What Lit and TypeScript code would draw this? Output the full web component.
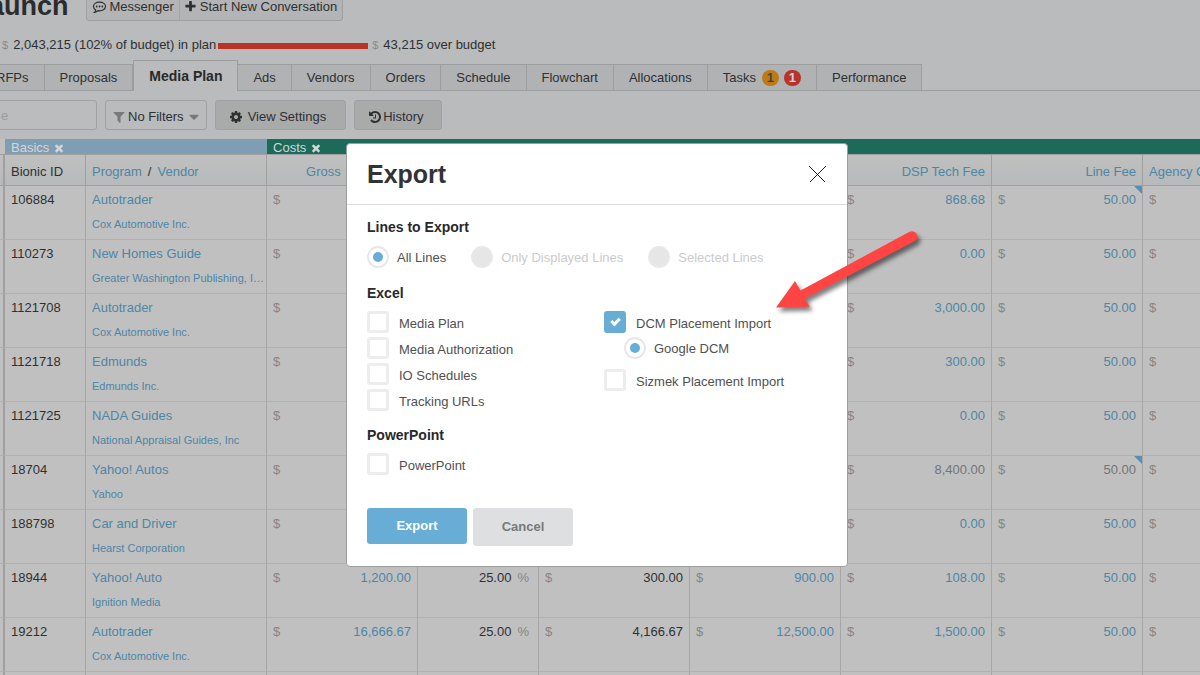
import { LitElement, html, css, svg, nothing } from "lit";
import { customElement, property } from "lit/decorators.js";
import { classMap } from "lit/directives/class-map.js";

const ICONS: Record<string, string> = {
  plus: "M1600 736v192q0 40-28 68t-68 28h-416v416q0 40-28 68t-68 28h-192q-40 0-68-28t-28-68v-416h-416q-40 0-68-28t-28-68v-192q0-40 28-68t68-28h416v-416q0-40 28-68t68-28h192q40 0 68 28t28 68v416h416q40 0 68 28t28 68z",
  filter: "M1595 295q17 41-14 70l-493 493v742q0 42-39 59-13 5-25 5-27 0-45-19l-256-256q-19-19-19-45v-486l-493-493q-31-29-14-70 17-39 59-39h1280q42 0 59 39z",
  cog: "M1152 896q0-106-75-181t-181-75-181 75-75 181 75 181 181 75 181-75 75-181zm512-109v222q0 12-8 23t-20 13l-185 28q-19 54-39 91 35 50 107 138 10 12 10 25t-9 23q-27 37-99 108t-94 71q-12 0-26-9l-138-108q-44 23-91 38-16 136-29 186-7 28-36 28h-222q-14 0-24.500-8.500t-11.500-21.500l-28-184q-49-16-90-37l-141 107q-10 9-25 9-14 0-25-11-126-114-165-168-7-10-7-23 0-12 8-23 15-21 51-66.500t54-70.500q-27-50-41-99l-183-27q-13-2-21-12.500t-8-23.500v-222q0-12 8-23t19-13l186-28q14-46 39-92-40-57-107-138-10-12-10-24 0-10 9-23 26-36 98.500-107.500t94.500-71.500q13 0 26 10l138 107q44-23 91-38 16-136 29-186 7-28 36-28h222q14 0 24.500 8.500t11.500 21.500l28 184q49 16 90 37l142-107q9-9 24-9 13 0 25 10 129 119 165 170 7 8 7 22 0 12-8 23-15 21-51 66.500t-54 70.500q26 50 41 98l183 28q13 2 21 12.500t8 23.500z",
  history: "M1664 896q0 156-61 298t-164 245-245 164-298 61q-172 0-327-72.500t-264-204.500q-7-10-6.500-22.500t8.500-20.500l137-138q10-9 25-9 16 2 23 12 73 95 179 147t225 52q104 0 198.500-40.500t163.500-109.500 109.500-163.500 40.500-198.500-40.500-198.500-109.500-163.500-163.500-109.500-198.500-40.500q-98 0-188 35.500t-160 101.500l137 138q31 30 14 69-17 40-59 40h-448q-26 0-45-19t-19-45v-448q0-42 40-59 39-17 69 14l130 129q107-101 244.500-156.500t284.500-55.500q156 0 298 61t245 164 164 245 61 298zm-640-288v448q0 14-9 23t-23 9h-320q-14 0-23-9t-9-23v-64q0-14 9-23t23-9h224v-352q0-14 9-23t23-9h64q14 0 23 9t9 23z",
  times: "M1490 1322q0 40-28 68l-136 136q-28 28-68 28t-68-28l-294-294-294 294q-28 28-68 28t-68-28l-136-136q-28-28-28-68t28-68l294-294-294-294q-28-28-28-68t28-68l136-136q28-28 68-28t68 28l294 294 294-294q28-28 68-28t68 28l136 136q28 28 28 68t-28 68l-294 294 294 294q28 28 28 68z",
  caret: "M1408 704q0 26-19 45l-448 448q-19 19-45 19t-45-19l-448-448q-19-19-19-45t19-45 45-19h896q26 0 45 19t19 45z",
};

const icon = (name: string, size = 14) => html`
  <svg class="icon" width=${size} height=${size} viewBox="0 0 1792 1792" aria-hidden="true">
    ${svg`<path fill="currentColor" d=${ICONS[name]}></path>`}
  </svg>`;

interface Line {
  id: string;
  program: string;
  vendor: string;
  gross?: string;
  rate?: string;
  fee?: string;
  net?: string;
  tech: string;
  line: string;
  muted?: boolean;
  flagged?: boolean;
}

const LINES: Line[] = [
  { id: "106884", program: "Autotrader", vendor: "Cox Automotive Inc.", tech: "868.68", line: "50.00", flagged: true },
  { id: "110273", program: "New Homes Guide", vendor: "Greater Washington Publishing, Inc.", tech: "0.00", line: "50.00" },
  { id: "1121708", program: "Autotrader", vendor: "Cox Automotive Inc.", tech: "3,000.00", line: "50.00" },
  { id: "1121718", program: "Edmunds", vendor: "Edmunds Inc.", tech: "300.00", line: "50.00" },
  { id: "1121725", program: "NADA Guides", vendor: "National Appraisal Guides, Inc", tech: "0.00", line: "50.00" },
  { id: "18704", program: "Yahoo! Autos", vendor: "Yahoo", tech: "8,400.00", line: "50.00", muted: true, flagged: true },
  { id: "188798", program: "Car and Driver", vendor: "Hearst Corporation", tech: "0.00", line: "50.00" },
  { id: "18944", program: "Yahoo! Auto", vendor: "Ignition Media", gross: "1,200.00", rate: "25.00", fee: "300.00", net: "900.00", tech: "108.00", line: "50.00" },
  { id: "19212", program: "Autotrader", vendor: "Cox Automotive Inc.", gross: "16,666.67", rate: "25.00", fee: "4,166.67", net: "12,500.00", tech: "1,500.00", line: "50.00" },
];

@customElement("plan-header")
export class PlanHeader extends LitElement {
  static styles = css`
    :host { display: block; }
    .top { display: flex; align-items: center; gap: 17px; margin: -8px 0 0 -11px; }
    .title { margin: 0; font-size: 27px; line-height: 29px; font-weight: bold; color: #2c2c2e; }
    .actions { display: flex; border: 1px solid #9fa0a2; border-radius: 3px; background: #b2b4b5; }
    .action { display: flex; align-items: center; gap: 3px; height: 27px; margin: 0; padding: 0 5px; border: 0;
      background: none; font: inherit; color: inherit; white-space: nowrap; }
    .action + .action { padding: 0 5px 0 4px; border-left: 1px solid #a3a5a7; }
    .icon { flex: none; }
    .budget { display: flex; align-items: center; gap: 2px; margin: 16px 0 0 2px; line-height: 16px; }
    .money { display: flex; gap: 5px; white-space: nowrap; }
    .unit { font-size: 11px; color: #8b8c8d; }
    .bar { width: 150px; height: 6px; margin: 2px 2px 0 0; background: #b93428; }
  `;
  render() {
    return html`
      <header class="top">
        <h1 class="title">aunch</h1>
        <div class="actions">
          <button class="action" type="button">
            <svg class="icon" width="15" height="14" viewBox="0 0 15 14" aria-hidden="true">
              <path d="M7.500 2.200C4 2.200 1.500 4 1.500 6.500c0 1.500.9 2.700 2.300 3.500-.1 1-.5 1.700-1.200 2.300 1.500-.1 2.700-.8 3.400-1.600 4.400.5 7.500-1.500 7.500-4.200 0-2.500-2.500-4.300-6-4.300Z" fill="none" stroke="currentColor" stroke-width="1.200"></path>
              <circle cx="4.700" cy="6.500" r=".9" fill="currentColor"></circle>
              <circle cx="7.500" cy="6.500" r=".9" fill="currentColor"></circle>
              <circle cx="10.300" cy="6.500" r=".9" fill="currentColor"></circle>
            </svg>
            Messenger
          </button>
          <button class="action" type="button">${icon("plus", 13)}Start New Conversation</button>
        </div>
      </header>
      <div class="budget">
        <span class="money"><span class="unit">$</span>2,043,215 (102% of budget) in plan</span>
        <span class="bar"></span>
        <span class="money"><span class="unit">$</span>43,215 over budget</span>
      </div>`;
  }
}

@customElement("plan-tabs")
export class PlanTabs extends LitElement {
  static styles = css`
    :host { display: block; }
    .tabs { display: flex; align-items: flex-end; height: 30px; margin-top: 7px; padding-right: 16px;
      border-bottom: 1px solid #9b9d9f; }
    .tab { box-sizing: border-box; display: flex; align-items: center; gap: 6px; height: 26px; padding: 0 15px;
      border: solid #9b9d9f; border-width: 1px 1px 0 0; background: #b0b2b4; color: #2f3032;
      text-decoration: none; white-space: nowrap; }
    .tab:first-child { margin-left: -19px; }
    .active { height: 31px; margin-bottom: -1px; border-left-width: 1px;
      background: #b9bbbc; font-size: 14px; font-weight: bold; color: #28292b; }
    .badge { width: 17px; height: 16px; border-radius: 8px; line-height: 16px; text-align: center;
      font-weight: bold; background: #bd7b18; color: #4d4332; }
    .alert { background: #b9322b; color: #d4d4d4; margin-left: -1px; }
  `;
  render() {
    const names = ["RFPs", "Proposals", "Media Plan", "Ads", "Vendors", "Orders", "Schedule", "Flowchart", "Allocations", "Tasks", "Performance"];
    return html`<nav class="tabs">
      ${names.map((n) => html`<a href="#" class=${classMap({ tab: true, active: n === "Media Plan" })}>${n}${n === "Tasks"
        ? html`<span class="badge">1</span><span class="badge alert">1</span>` : nothing}</a>`)}
    </nav>`;
  }
}

@customElement("plan-toolbar")
export class PlanToolbar extends LitElement {
  static styles = css`
    :host { display: block; }
    .bar { display: flex; gap: 8px; margin: 9px 0; }
    .search, .button { box-sizing: border-box; height: 30px; border: 1px solid #9fa1a2; border-radius: 3px; font: inherit; color: #2f3032; }
    .search { width: 107px; margin-left: -10px; padding: 0 10px; background: #babcbd; }
    .search::placeholder { color: #9a9c9d; opacity: 1; }
    .button { display: flex; align-items: center; justify-content: center; gap: 5px; padding: 4px 19px 0 13px; background: #a9abab; white-space: nowrap; }
    .plain { gap: 2px; padding: 4px 4px 0 6px; background: #b9bbbc; }
    .plain .icon { color: #77797a; }
    .history { gap: 1px; padding: 4px 17px 0 13px; }
  `;
  render() {
    return html`<div class="bar">
      <input class="search" type="text" placeholder="e" aria-label="Search" />
      <button class="button plain" type="button">${icon("filter", 14)}No Filters ${icon("caret", 16)}</button>
      <button class="button" type="button">${icon("cog", 14)} View Settings</button>
      <button class="button history" type="button">${icon("history", 14)}History</button>
    </div>`;
  }
}

@customElement("plan-grid")
export class PlanGrid extends LitElement {
  static styles = css`
    :host { display: block; overflow: hidden; }
    .grid { width: 1294px; table-layout: fixed; border-collapse: separate; border-spacing: 0; background: #c0c0c0; }
    .stub { width: 5px; }
    .c-id { width: 81px; }
    .c-name { width: 181px; }
    .c-rate { width: 121px; }
    .c-cost { width: 151px; }
    th, td { box-sizing: border-box; padding: 0 6px; overflow: hidden; text-align: left; font-weight: normal; white-space: nowrap; }
    .group { height: 15px; line-height: 15px; color: #d2d6d8; }
    .group-flex { display: flex; align-items: center; gap: 4px; height: 13px; padding-top: 2px; }
    .close { display: flex; margin: 0; padding: 0; border: 0; background: none; color: inherit; }
    .basics { background: #809eb3; }
    .costs { background: #1b6a5a; }
    .head { height: 32px; padding-top: 3px; border: solid #9fa1a1; border-width: 1px 1px 1px 0; background: linear-gradient(#c0c0c0, #b7b9ba); }
    .slash { padding: 0 6px; }
    .cell { position: relative; height: 54px; padding-top: 6px; border: solid #b1b1b1; border-width: 0 1px 1px 0;
      border-right-color: #a6a6a6; vertical-align: top; line-height: 16px; }
    .edge { padding: 0; border-right: 2px solid #a0a0a0; }
    .id { color: #303032; }
    .link { color: #4d86a6; text-decoration: none; }
    .name { display: block; overflow: hidden; text-overflow: ellipsis; }
    .vendor { margin: 8px -4px 0 0; font-size: 11px; }
    .right { text-align: right; }
    .gross { padding-left: 39px; }
    .pair { display: flex; justify-content: space-between; gap: 6px; }
    .pct { justify-content: flex-end; padding-right: 3px; }
    .unit { color: #868686; }
    .muted { color: #757575; }
    .flag { position: absolute; top: 0; right: 0; width: 8px; height: 8px; background: #5590b4; clip-path: polygon(0 0, 100% 0, 100% 100%); }
  `;
  money(value: string | undefined, cls = "link") {
    return html`<div class="pair"><span class="unit">$</span><span class=${cls}>${value}</span></div>`;
  }
  render() {
    return html`<table class="grid">
      <colgroup>
        <col class="stub" /><col class="c-id" /><col class="c-name" /><col class="c-cost" /><col class="c-rate" />
        <col class="c-cost" /><col class="c-cost" /><col class="c-cost" /><col class="c-cost" /><col class="c-cost" />
      </colgroup>
      <thead>
        <tr>
          <th></th>
          <th class="group basics" colspan="2"><div class="group-flex">Basics <button class="close" aria-label="Close Basics">${icon("times", 12)}</button></div></th>
          <th class="group costs" colspan="7"><div class="group-flex">Costs <button class="close" aria-label="Close Costs">${icon("times", 12)}</button></div></th>
        </tr>
        <tr>
          <th class="head edge"></th>
          <th class="head id">Bionic ID</th>
          <th class="head"><a class="link" href="#">Program</a><span class="slash">/</span><a class="link" href="#">Vendor</a></th>
          <th class="head gross"><a class="link" href="#">Gross</a></th>
          <th class="head"></th><th class="head"></th><th class="head"></th>
          <th class="head right"><a class="link" href="#">DSP Tech Fee</a></th>
          <th class="head right"><a class="link" href="#">Line Fee</a></th>
          <th class="head"><a class="link" href="#">Agency C</a></th>
        </tr>
      </thead>
      <tbody>
        ${[...LINES, null].map((l) => {
          if (!l) {
            return html`<tr><td class="cell edge"></td>${Array.from({ length: 9 }, () => html`<td class="cell"></td>`)}</tr>`;
          }
          const tone = l.muted ? "muted" : "link";
          return html`<tr>
            <td class="cell edge"></td>
            <td class="cell id">${l.id}</td>
            <td class="cell"><a class="link name" href="#">${l.program}</a><a class="link name vendor" href="#">${l.vendor}</a></td>
            <td class="cell">${this.money(l.gross)}</td>
            <td class="cell">${l.rate ? html`<div class="pair pct"><span class="id">${l.rate}</span><span class="unit">%</span></div>` : nothing}</td>
            <td class="cell">${l.fee ? this.money(l.fee, "id") : nothing}</td>
            <td class="cell">${l.net ? this.money(l.net) : nothing}</td>
            <td class="cell">${this.money(l.tech, tone)}</td>
            <td class="cell">${this.money(l.line, tone)}${l.flagged ? html`<span class="flag"></span>` : nothing}</td>
            <td class="cell">${this.money("")}</td>
          </tr>`;
        })}
      </tbody>
    </table>`;
  }
}

@customElement("choice-box")
export class ChoiceBox extends LitElement {
  @property() kind = "checkbox";
  @property() group = "";
  @property() label = "";
  @property({ type: Boolean }) checked = false;
  @property({ type: Boolean }) disabled = false;
  static styles = css`
    :host { display: block; }
    .choice { display: flex; align-items: center; gap: 10px; height: 22px; color: #505052; white-space: nowrap; }
    .radio { gap: 8px; }
    .text { padding-top: 3px; line-height: 16px; }
    .radio .text { padding-top: 1px; }
    .off { color: #cbcbcb; }
    .control { appearance: none; box-sizing: border-box; display: grid; place-content: center; flex: none;
      width: 22px; height: 22px; margin: 0; border: 3px solid #ededed; border-radius: 3px; background: #fff; }
    .radio .control { border: 2px solid #e8e8e8; border-radius: 50%; }
    .control:disabled { background: #e6e6e6; }
    .radio .control:checked::before { content: ""; width: 10px; height: 10px; border-radius: 50%; background: #68add6; }
    .box .control:checked { border-color: #68add6; background: #68add6; }
    .box .control:checked::before { content: ""; width: 6px; height: 3px; margin-bottom: 3px; border: solid #fff; border-width: 0 0 3px 3px; transform: rotate(-45deg); }
  `;
  render() {
    const radio = this.kind === "radio";
    return html`<label class=${classMap({ choice: true, radio, box: !radio, off: this.disabled })}>
      <input class="control" type=${this.kind} name=${this.group} .checked=${this.checked} ?disabled=${this.disabled} />
      <span class="text">${this.label}</span>
    </label>`;
  }
}

@customElement("export-dialog")
export class ExportDialog extends LitElement {
  static styles = css`
    :host { display: block; }
    .dialog { box-sizing: border-box; width: 502px; border: 1px solid #9c9e9e; border-radius: 4px; background: #fff; overflow: hidden; }
    .head { display: flex; align-items: center; justify-content: space-between; box-sizing: border-box; padding: 0 21px 0 20px; height: 61px; border-bottom: 1px solid #dcdddd; }
    .title { margin: 0; font-size: 25px; line-height: 30px; color: #323334; }
    .close { display: flex; margin: 0; padding: 0; border: 0; background: none; color: #222; }
    .body { padding: 14px 20px 20px; }
    .section { margin: 0 0 10px; font-size: 14px; line-height: 16px; color: #28292b; }
    .scope { display: flex; gap: 25px; padding-top: 1px; margin-bottom: 17px; }
    .columns { display: grid; grid-template-columns: 237px 1fr; margin-bottom: 16px; }
    .list { display: flex; flex-direction: column; gap: 4px; }
    .nested { padding: 0 0 6px 20px; }
    .foot { display: flex; align-items: flex-start; gap: 6px; margin-top: 33px; }
    .button { width: 100px; height: 38px; margin: 0; padding: 0; border: 0; border-radius: 3px; background: #dedfe0; color: #78797a; font: inherit; font-weight: bold; }
    .primary { height: 36px; background: #68add6; color: #fff; }
  `;
  render() {
    return html`<section class="dialog" role="dialog" aria-labelledby="t">
      <header class="head">
        <h2 class="title" id="t">Export</h2>
        <button class="close" type="button" aria-label="Close">
          <svg width="17" height="17" viewBox="0 0 17 17"><path d="M.5.5l16 16M16.500.5l-16 16" stroke="currentColor" stroke-width="1" shape-rendering="crispEdges"></path></svg>
        </button>
      </header>
      <div class="body">
        <h3 class="section">Lines to Export</h3>
        <div class="scope">
          <choice-box kind="radio" group="scope" label="All Lines" checked></choice-box>
          <choice-box kind="radio" group="scope" label="Only Displayed Lines" disabled></choice-box>
          <choice-box kind="radio" group="scope" label="Selected Lines" disabled></choice-box>
        </div>
        <h3 class="section">Excel</h3>
        <div class="columns">
          <div class="list">
            <choice-box label="Media Plan"></choice-box>
            <choice-box label="Media Authorization"></choice-box>
            <choice-box label="IO Schedules"></choice-box>
            <choice-box label="Tracking URLs"></choice-box>
          </div>
          <div class="list">
            <choice-box label="DCM Placement Import" checked></choice-box>
            <choice-box class="nested" kind="radio" group="dcm" label="Google DCM" checked></choice-box>
            <choice-box label="Sizmek Placement Import"></choice-box>
          </div>
        </div>
        <h3 class="section">PowerPoint</h3>
        <choice-box label="PowerPoint"></choice-box>
        <div class="foot">
          <button class="button primary" type="button">Export</button>
          <button class="button" type="button">Cancel</button>
        </div>
      </div>
    </section>`;
  }
}

@customElement("app-root")
export class AppRoot extends LitElement {
  static styles = css`
    :host { display: block; position: relative; height: 100vh; overflow: hidden; background: #b9bbbc;
      font: 13px/16px "Liberation Sans", Arial, sans-serif; color: #2f3032; }
    .overlay { position: absolute; inset: 0; display: flex; justify-content: center; align-items: flex-start; padding: 143px 6px 0 0; }
    .arrow { position: absolute; left: 766px; top: 222px; overflow: visible; filter: drop-shadow(3px 4px 2px rgba(0, 0, 0, 0.5)); }
  `;
  render() {
    return html`
      <plan-header></plan-header>
      <plan-tabs></plan-tabs>
      <plan-toolbar></plan-toolbar>
      <plan-grid></plan-grid>
      <div class="overlay"><export-dialog></export-dialog></div>
      <svg class="arrow" width="160" height="100" viewBox="766 222 160 100" aria-hidden="true">
        <path fill="#ff4444" d="M776 307.500 795 281 800.500 290.500 909.500 231.800A5.300 5.300 0 0 1 914.500 241.300L805 298.500 809.500 306.700Z"></path>
      </svg>`;
  }
}
